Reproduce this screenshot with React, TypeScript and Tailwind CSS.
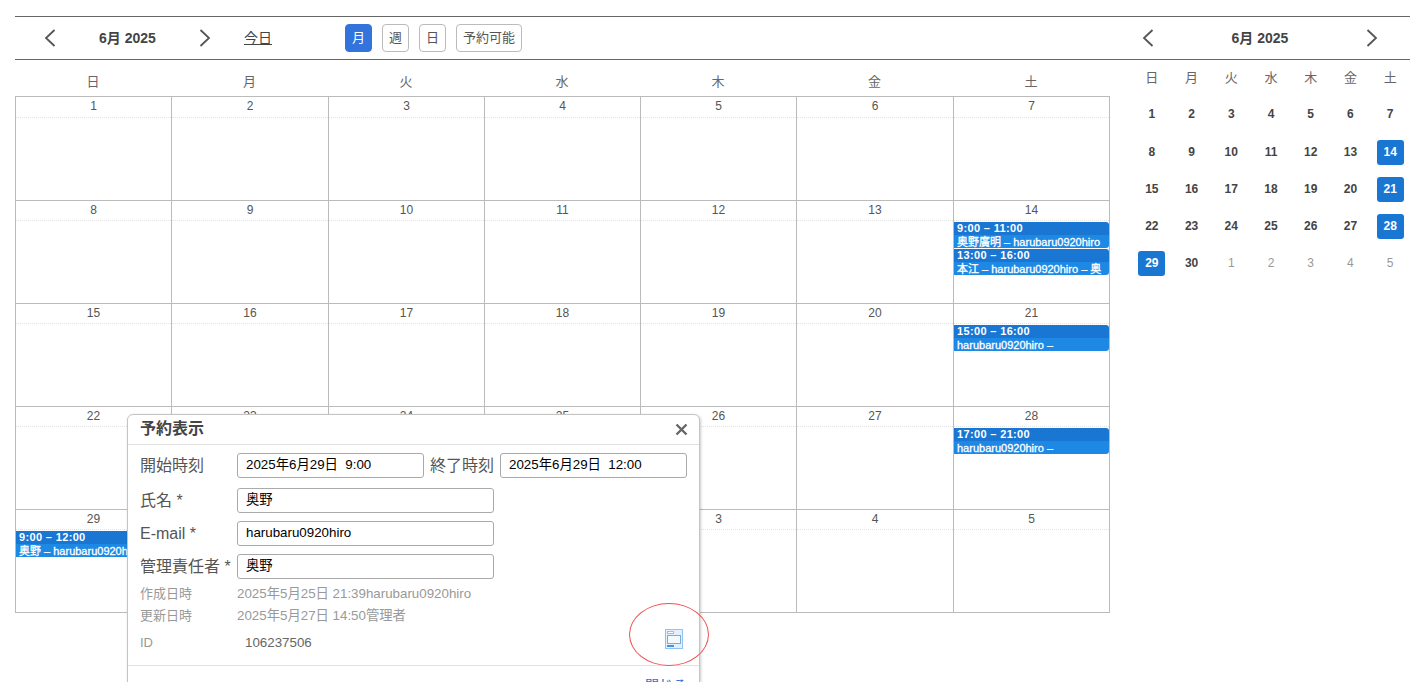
import React from "react";

const FONT = "[font-family:'Liberation_Sans','Noto_Sans_CJK_JP',sans-serif]";
const WEEK = ["日", "月", "火", "水", "木", "金", "土"];

type Ev = { time: string; title: string };
const EVENTS: Record<string, Ev[]> = {
  "14": [
    { time: "9:00 – 11:00", title: "奥野廣明 – harubaru0920hiro" },
    { time: "13:00 – 16:00", title: "本江 – harubaru0920hiro – 奥" },
  ],
  "21": [{ time: "15:00 – 16:00", title: "harubaru0920hiro –" }],
  "28": [{ time: "17:00 – 21:00", title: "harubaru0920hiro –" }],
  "29": [{ time: "9:00 – 12:00", title: "奥野 – harubaru0920hiro" }],
};

const WEEKS = [
  ["1", "2", "3", "4", "5", "6", "7"],
  ["8", "9", "10", "11", "12", "13", "14"],
  ["15", "16", "17", "18", "19", "20", "21"],
  ["22", "23", "24", "25", "26", "27", "28"],
  ["29", "30", "1", "2", "3", "4", "5"],
];

function Chevron({ dir }: { dir: "l" | "r" }) {
  return (
    <svg width="12" height="18" viewBox="0 0 12 18" fill="none" stroke="#555" strokeWidth="1.8">
      {dir === "l" ? <path d="M10.5 1 L2 9 L10.5 17" /> : <path d="M1.5 1 L10 9 L1.5 17" />}
    </svg>
  );
}

function ToolBtn({ label, active, w }: { label: string; active?: boolean; w: string }) {
  return (
    <div
      className={`${w} h-[28px] flex items-center justify-center rounded-[4px] text-[13px] border ${
        active ? "bg-[#3273dc] border-[#3273dc] text-white" : "border-[#bbbbbb] text-[#555555]"
      }`}
    >
      {label}
    </div>
  );
}

function Event({ ev }: { ev: Ev }) {
  return (
    <div className="mb-px rounded-r-[3px] overflow-hidden text-white whitespace-nowrap">
      <div className="bg-[#1976d2] h-[13px] pl-[3px] text-[11px] font-bold tracking-[0.35px] leading-[13px]">
        {ev.time}
      </div>
      <div className="bg-[#1e88e5] h-[13px] pl-[3px] text-[11px] leading-[15px] overflow-hidden [-webkit-text-stroke:0.3px_white]">
        {ev.title}
      </div>
    </div>
  );
}

function MonthGrid() {
  return (
    <div className="border-t border-l border-[#bbbbbb] grid grid-cols-[156px_157px_156px_156px_156px_157px_156px] w-[1095px]">
      {WEEKS.flat().map((d, i) => (
        <div
          key={i}
          className={`${i < 7 ? "h-[104px]" : "h-[103px]"} border-r border-b border-[#bbbbbb] text-[#555555]`}
        >
          <div
            className={`${
              i < 7 ? "h-[21px]" : "h-[20px]"
            } border-b border-dotted border-[#e4e4e4] text-center text-[12px] leading-[18px]`}
          >
            {d}
          </div>
          <div className="pt-px">
            {i < 30 && (EVENTS[d] || []).map((ev, k) => <Event key={k} ev={ev} />)}
          </div>
        </div>
      ))}
    </div>
  );
}

function MiniCal() {
  return (
    <div className="w-[278px] ml-[22px]">
      <div className="grid grid-cols-7 h-[36px] items-center text-[13px] text-[#666666] text-center">
        {WEEK.map((w) => (
          <div key={w}>{w}</div>
        ))}
      </div>
      <div className="flex flex-col">
        {WEEKS.map((row, r) => (
          <div key={r} className={`grid grid-cols-7 h-[37px] ${r === 0 ? "mb-px" : ""}`}>
            {row.map((d, i) => {
              const sel = (r < 4 && i === 6 && r > 0) || (r === 4 && i === 0);
              const muted = r === 4 && i > 1;
              return (
                <div key={i} className="flex items-center justify-center">
                  <div
                    className={`w-[27px] h-[25px] pb-px rounded-[3px] flex items-center justify-center text-[12px] ${
                      sel
                        ? "bg-[#1976d2] text-white font-bold"
                        : muted
                        ? "text-[#999999]"
                        : "text-[#444444] font-bold"
                    }`}
                  >
                    {d}
                  </div>
                </div>
              );
            })}
          </div>
        ))}
      </div>
    </div>
  );
}

function Field({ w, value }: { w: string; value: string }) {
  return (
    <div
      className={`${w} h-[25px] shrink-0 border border-[#aaaaaa] rounded-[3px] pl-[8px] text-[13.33px] leading-[22px] text-black whitespace-pre`}
    >
      {value}
    </div>
  );
}

function Row({ label, value, mb }: { label: string; value: string; mb: string }) {
  return (
    <div className={`flex items-center h-[25px] ${mb}`}>
      <div className="w-[97px] text-[16px] text-[#555555] whitespace-nowrap">{label}</div>
      <Field w="w-[257px]" value={value} />
    </div>
  );
}

function Modal() {
  return (
    <div className="absolute left-[127px] top-[414px] w-[573px] h-[300px] bg-white border border-[#c4c4c4] rounded-[6px] shadow-[1px_1px_3px_rgba(0,0,0,0.2)]">
      <div className="h-[30px] border-b border-[#e2e2e2] flex items-center justify-between pl-[12px] pr-[11px]">
        <div className="text-[16px] font-bold text-[#444444] pb-px">予約表示</div>
        <svg width="13" height="13" viewBox="0 0 13 13" stroke="#666666" strokeWidth="2.4">
          <path d="M1.5 1.5 L11.5 11.5 M11.5 1.5 L1.5 11.5" />
        </svg>
      </div>
      <div className="pl-[12px] pt-[8px]">
        <div className="flex items-center h-[25px] mb-[10px]">
          <div className="w-[97px] text-[16px] text-[#555555]">開始時刻</div>
          <Field w="w-[187px]" value="2025年6月29日  9:00" />
          <div className="w-[76px] pl-[6px] text-[16px] text-[#555555] whitespace-nowrap">終了時刻</div>
          <Field w="w-[187px]" value="2025年6月29日  12:00" />
        </div>
        <Row label="氏名 *" value="奥野" mb="mb-[8px]" />
        <Row label="E-mail *" value="harubaru0920hiro" mb="mb-[8px]" />
        <Row label="管理責任者 *" value="奥野" mb="mb-[4px]" />
        <div className="flex h-[22px] items-center text-[13px] text-[#999999] mt-px">
          <div className="w-[97px]">作成日時</div>
          <div className="text-[13.33px]">2025年5月25日 21:39harubaru0920hiro</div>
        </div>
        <div className="flex h-[22px] items-center text-[13px] text-[#999999]">
          <div className="w-[97px]">更新日時</div>
          <div className="text-[13.33px]">2025年5月27日 14:50管理者</div>
        </div>
        <div className="flex h-[27px] mt-[2px] items-center text-[13px]">
          <div className="w-[105px] text-[#999999]">ID</div>
          <div className="text-[#666666] text-[13.33px] pt-px">106237506</div>
        </div>
      </div>
      <div className="mt-[9px] border-t border-[#e2e2e2] pt-[9px] pr-[12px] text-right text-[14px] text-[#3273dc]">
        閉じる
      </div>
      <svg
        className="absolute left-[537px] top-[214px]"
        width="18"
        height="20"
        viewBox="0 0 18 20"
        fill="none"
      >
        <rect x="0.5" y="0.5" width="17" height="19" fill="#e3f0fd" stroke="#8fc2f5" />
        <rect x="2.5" y="2.5" width="6" height="2" fill="#ffffff" stroke="#8fc2f5" />
        <rect x="2.5" y="6.5" width="13" height="8" fill="#f4f9fe" stroke="#7fa9d6" />
        <rect x="2" y="16" width="7" height="2" fill="#4a90e2" />
      </svg>
      <div className="absolute left-[501px] top-[188px] w-[80px] h-[63px] rounded-[50%] border border-[#f05050]" />
    </div>
  );
}

export default function App() {
  return (
    <div className={`${FONT} relative h-[682px] w-[1416px] overflow-hidden bg-white pt-[16px]`}>
      <div className="ml-[15px] w-[1395px]">
        <div className="h-[44px] border-y border-[#666666] flex items-center pl-[29px]">
          <Chevron dir="l" />
          <div className="w-[143px] text-center text-[14px] font-bold text-[#444444] shrink-0">6月 2025</div>
          <Chevron dir="r" />
          <div className="ml-[33px] w-[28px] text-[14px] text-[#444444] underline shrink-0">今日</div>
          <div className="ml-[73px] flex gap-[10px]">
            <ToolBtn label="月" active w="w-[27px]" />
            <ToolBtn label="週" w="w-[27px]" />
            <ToolBtn label="日" w="w-[27px]" />
            <ToolBtn label="予約可能" w="w-[66px]" />
          </div>
          <div className="ml-[620px]">
            <Chevron dir="l" />
          </div>
          <div className="w-[212px] text-center text-[14px] font-bold text-[#444444] shrink-0">6月 2025</div>
          <Chevron dir="r" />
        </div>
        <div className="flex">
          <div>
            <div className="grid grid-cols-[156px_157px_156px_156px_156px_157px_156px] w-[1095px] h-[36px] items-center pt-[7px] text-[13px] text-[#666666] text-center">
              {WEEK.map((w) => (
                <div key={w}>{w}</div>
              ))}
            </div>
            <MonthGrid />
          </div>
          <MiniCal />
        </div>
      </div>
      <Modal />
    </div>
  );
}
